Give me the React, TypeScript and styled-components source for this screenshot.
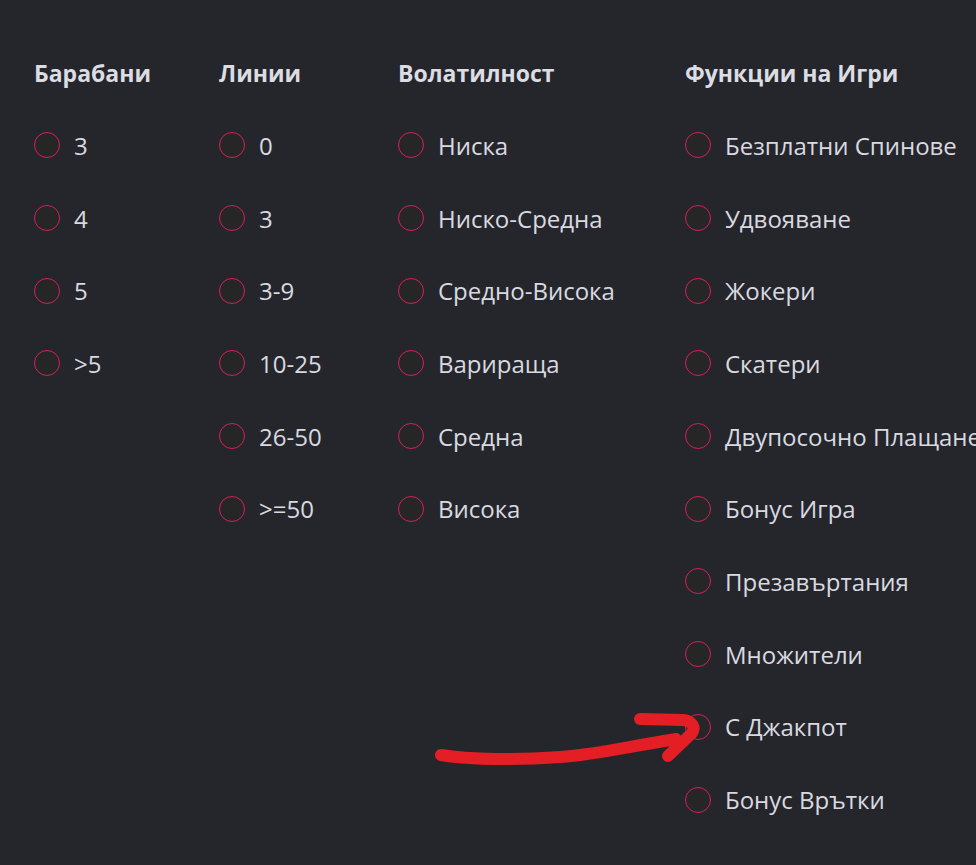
import React from "react";
import styled, { createGlobalStyle } from "styled-components";

const Global = createGlobalStyle`
  html, body { margin: 0; padding: 0; background: #25262b; overflow: hidden; }
  body { font-family: "Open Sans", "Noto Sans", sans-serif; }
`;

const Page = styled.div`
  position: relative;
  width: 976px;
  height: 865px;
  background: #25262b;
  overflow: hidden;
`;

const Columns = styled.div`
  display: grid;
  grid-template-columns: 185px 179px 287px max-content;
  padding: 58px 0 0 34px;
`;

const Column = styled.div`
  display: flex;
  flex-direction: column;
`;

const Heading = styled.h3`
  margin: 0 0 39px;
  height: 30px;
  font-size: 23px;
  line-height: 30px;
  font-weight: 700;
  color: #dcdce3;
  white-space: nowrap;
`;

const Option = styled.label`
  display: flex;
  align-items: center;
  gap: 14px;
  height: 72.7px;
  margin-top: -18px;
  margin-bottom: 18px;
  color: #d9d9e0;
  font-size: 24px;
  font-weight: 500;
  white-space: nowrap;
  cursor: pointer;
`;

const Radio = styled.span`
  flex: none;
  width: 24px;
  height: 24px;
  border-radius: 50%;
  border: 1px solid #d81f5a;
  background: #262626;
`;

const Arrow = styled.svg`
  position: absolute;
  left: 0;
  top: 0;
  pointer-events: none;
`;

const data: { title: string; items: string[] }[] = [
  { title: "Барабани", items: ["3", "4", "5", ">5"] },
  { title: "Линии", items: ["0", "3", "3-9", "10-25", "26-50", ">=50"] },
  {
    title: "Волатилност",
    items: ["Ниска", "Ниско-Средна", "Средно-Висока", "Варираща", "Средна", "Висока"],
  },
  {
    title: "Функции на Игри",
    items: [
      "Безплатни Спинове",
      "Удвояване",
      "Жокери",
      "Скатери",
      "Двупосочно Плащане",
      "Бонус Игра",
      "Презавъртания",
      "Множители",
      "С Джакпот",
      "Бонус Врътки",
    ],
  },
];

export default function App() {
  return (
    <Page>
      <Global />
      <Columns>
        {data.map((col) => (
          <Column key={col.title}>
            <Heading>{col.title}</Heading>
            {col.items.map((it) => (
              <Option key={it}>
                <Radio />
                {it}
              </Option>
            ))}
          </Column>
        ))}
      </Columns>
      <Arrow width="976" height="865" viewBox="0 0 976 865">
        <path
          d="M441 755 C 470 760, 520 760, 560 757 C 600 754, 620 748, 676 739"
          fill="none"
          stroke="#e31e24"
          strokeWidth="12"
          strokeLinecap="round"
        />
        <path
          d="M640 719 L 683 720 C 692 721, 696 727, 692 733 L 668 756"
          fill="none"
          stroke="#e31e24"
          strokeWidth="12"
          strokeLinecap="round"
          strokeLinejoin="round"
        />
      </Arrow>
    </Page>
  );
}
